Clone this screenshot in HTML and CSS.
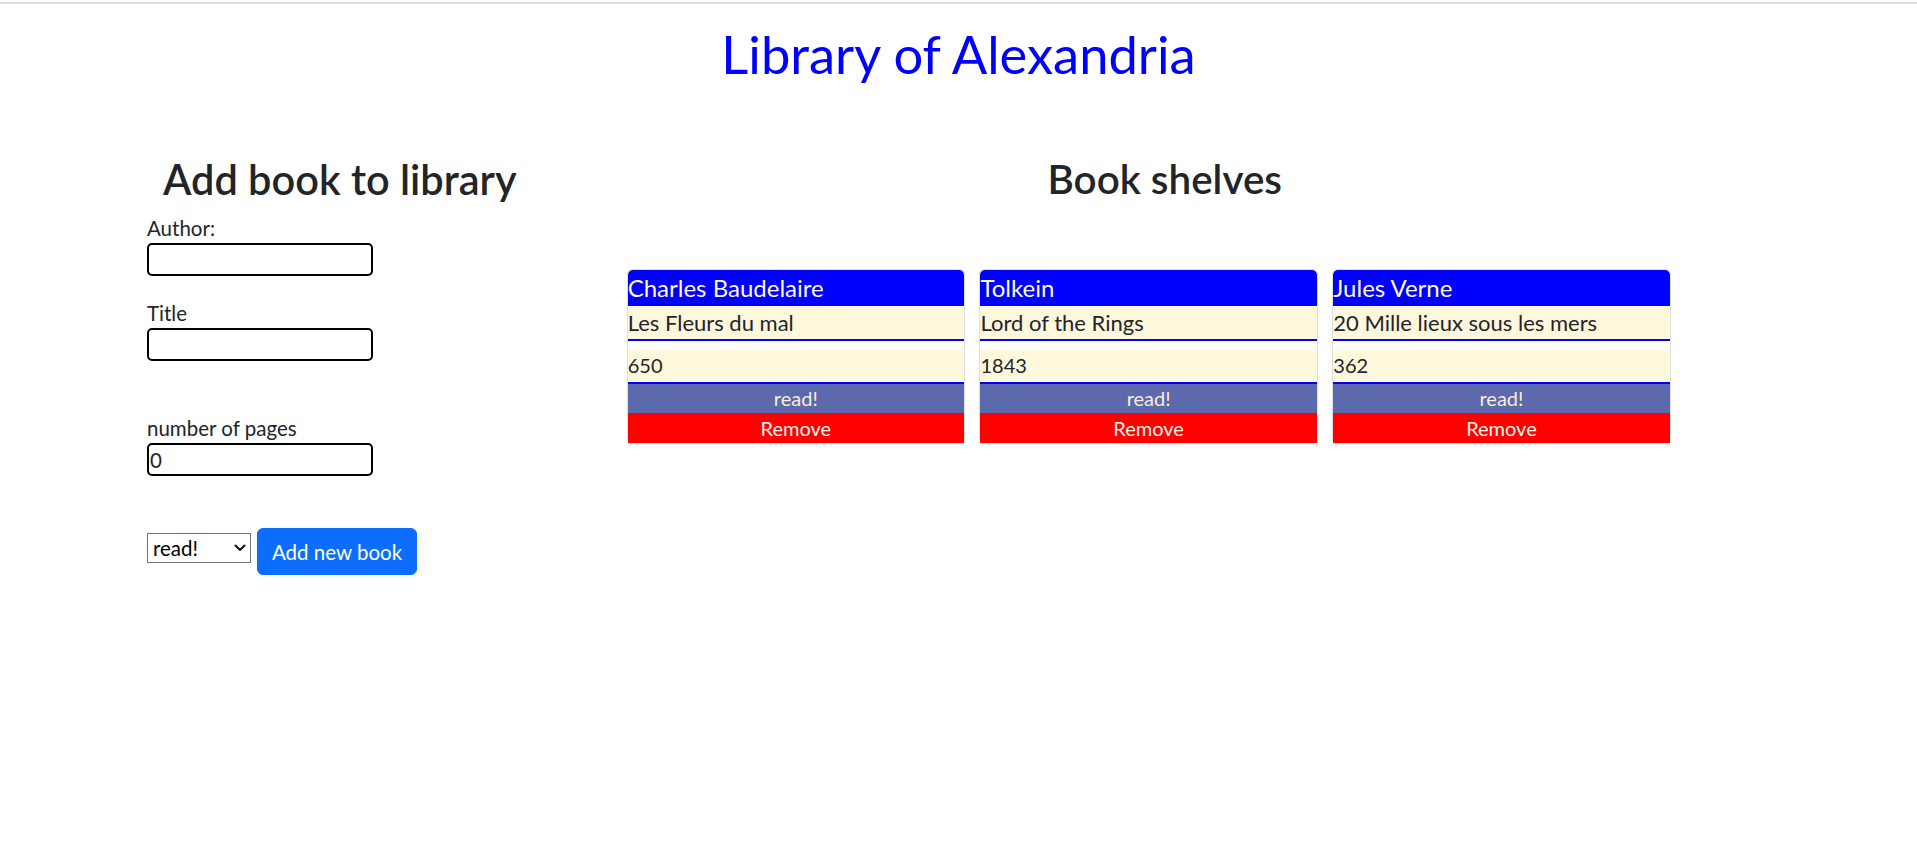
FILE: index.html
```html
<!DOCTYPE html>
<html lang="en">
<head>
<meta charset="utf-8">
<title>Library of Alexandria</title>
<link rel="stylesheet" href="styles.css">
</head>
<body>
<div class="topline"></div>
<h1 class="site-title">Library of Alexandria</h1>
<div class="container">
  <div class="row">
    <section class="col-form">
      <h2 class="section-title title-form">Add book to library</h2>
      <form class="book-form">
        <div class="field field-author">
          <label for="author">Author:</label>
          <input id="author" type="text">
        </div>
        <div class="field field-title">
          <label for="title">Title</label>
          <input id="title" type="text">
        </div>
        <div class="field field-pages">
          <label for="pages">number of pages</label>
          <input id="pages" type="number" value="0">
        </div>
        <div class="controls">
          <div class="select-wrap">
            <select class="read-select">
              <option>read!</option>
              <option>not read</option>
            </select>
            <svg class="chevron" width="12" height="8" viewBox="0 0 12 8" aria-hidden="true">
              <path d="M1.5 1.5 L6 6 L10.5 1.5" fill="none" stroke="#111111" stroke-width="2" stroke-linecap="round" stroke-linejoin="round"/>
            </svg>
          </div>
          <button type="button" class="btn-add">Add new book</button>
        </div>
      </form>
    </section>
    <section class="col-shelves">
      <h2 class="section-title title-shelves">Book shelves</h2>
      <div class="cards">
        <div class="card">
          <div class="card-author">Charles Baudelaire</div>
          <div class="card-title">Les Fleurs du mal</div>
          <div class="card-pages">650</div>
          <div class="card-read">read!</div>
          <div class="card-remove">Remove</div>
        </div>
        <div class="card">
          <div class="card-author">Tolkein</div>
          <div class="card-title">Lord of the Rings</div>
          <div class="card-pages">1843</div>
          <div class="card-read">read!</div>
          <div class="card-remove">Remove</div>
        </div>
        <div class="card">
          <div class="card-author">Jules Verne</div>
          <div class="card-title">20 Mille lieux sous les mers</div>
          <div class="card-pages">362</div>
          <div class="card-read">read!</div>
          <div class="card-remove">Remove</div>
        </div>
      </div>
    </section>
  </div>
</div>
</body>
</html>
```

FILE: styles.css
```css
* {
  box-sizing: border-box;
}

html, body {
  margin: 0;
  padding: 0;
  background: #ffffff;
}

body {
  font-family: "Lato", "Liberation Sans", sans-serif;
  font-size: 20.5px;
  line-height: 30px;
  color: #212529;
}

.topline {
  height: 2px;
  margin-top: 2px;
  background: #dcdce2;
}

.site-title {
  margin: 20.3px 0 0;
  font-size: 52.5px;
  line-height: 60px;
  font-weight: 400;
  color: #0000ff;
  text-align: center;
}

.container {
  width: 1650px;
  margin: 0 auto;
}

.row {
  display: flex;
  margin-top: 70.4px;
}

.col-form {
  width: 412.5px;
  padding: 0 15px 0 13.5px;
}

.col-shelves {
  flex: 1;
  padding: 0 15px;
}

.section-title {
  margin: 0 0 10px;
  line-height: 48px;
  font-weight: 600;
  text-align: center;
  color: #212529;
}

.title-form {
  font-size: 41.5px;
  padding-left: 1.5px;
}

.title-shelves {
  font-size: 40.4px;
}

.field label {
  display: block;
  line-height: 30px;
}

.field input {
  display: block;
  width: 226px;
  height: 33.5px;
  padding: 0 1px;
  border: 2px solid #000000;
  border-radius: 5px;
  font-family: inherit;
  font-size: 20.5px;
  color: #212529;
  background: #ffffff;
  -moz-appearance: textfield;
}

.field input::-webkit-inner-spin-button,
.field input::-webkit-outer-spin-button {
  -webkit-appearance: none;
  margin: 0;
}

.field-author {
  margin-bottom: 21.6px;
}

.field-title {
  margin-bottom: 51.6px;
}

.field-pages {
  margin-bottom: 51.3px;
}

.controls {
  display: flex;
  align-items: flex-start;
  gap: 5.3px;
}

.select-wrap {
  position: relative;
  margin-top: 5px;
}

.read-select {
  display: block;
  width: 104.4px;
  height: 30.4px;
  border: 1px solid #767676;
  border-radius: 0;
  background: #ffffff;
  font-family: inherit;
  font-size: 20.5px;
  color: #000000;
  padding: 0 0 0 5px;
  -webkit-appearance: none;
  appearance: none;
}

.chevron {
  position: absolute;
  left: 87px;
  top: 11px;
  pointer-events: none;
}

.btn-add {
  width: 160.7px;
  height: 47.7px;
  padding: 0;
  border: 1px solid #0d6efd;
  border-radius: 6px;
  background: #0d6efd;
  color: #ffffff;
  font-family: inherit;
  font-size: 20.5px;
  line-height: 30px;
}

.cards {
  display: flex;
  gap: 14.5px;
  margin-top: 66.1px;
  padding-left: 65.7px;
}

.card {
  width: 338.3px;
  border: 1px solid #dfdfdf;
  border-radius: 5px;
  background: #ffffff;
}

.card-author {
  height: 36px;
  line-height: 36px;
  font-size: 24px;
  background: #0000ff;
  color: #fff8dc;
  border-radius: 5px 5px 0 0;
  white-space: nowrap;
}

.card-title {
  height: 35px;
  line-height: 33px;
  font-size: 22px;
  background: #fff8dc;
  border-bottom: 2px solid #0000ff;
  white-space: nowrap;
}

.card-pages {
  margin-top: 9.7px;
  height: 33.3px;
  line-height: 31.3px;
  font-size: 20px;
  background: #fff8dc;
  border-bottom: 2px solid #0000ff;
}

.card-read {
  height: 29.7px;
  line-height: 29.7px;
  font-size: 20px;
  text-align: center;
  background: #5c69ad;
  color: #fbecd8;
}

.card-remove {
  height: 30px;
  line-height: 30px;
  font-size: 20px;
  text-align: center;
  background: #ff0000;
  color: #fff6ea;
}
```
